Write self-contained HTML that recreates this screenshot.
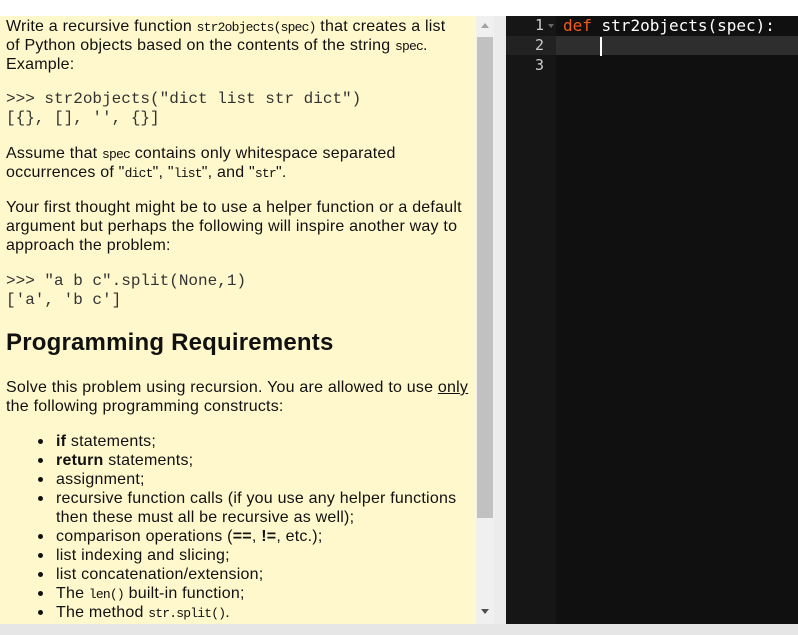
<!DOCTYPE html><html><head><style>
body{margin:0;width:798px;height:635px;background:#fff;position:relative;overflow:hidden;font-family:"Liberation Sans",Arial,sans-serif;font-size:16px;color:#111}
#left{position:absolute;left:0;top:16px;width:476px;height:608px;background:#fff8cc;overflow:hidden}
.l{position:absolute;left:6px;line-height:19px;white-space:nowrap;letter-spacing:0.22px}
.m{font-family:"Liberation Mono",monospace;font-size:16px;color:#333;letter-spacing:0}
.s{font-family:"Liberation Mono",monospace;font-size:13px;letter-spacing:-0.8px}
.b{position:absolute;left:38px;width:5px;height:5px;border-radius:50%;background:#111}
.li{position:absolute;left:56px;line-height:19px;white-space:nowrap;letter-spacing:0.22px}
#sb{position:absolute;left:476px;top:16px;width:18px;height:608px;background:#f0f0f0}
#thumb{position:absolute;left:477px;top:37px;width:16px;height:481px;background:#c1c1c1}
#gap{position:absolute;left:494px;top:16px;width:12px;height:608px;background:#ececec}
#bot{position:absolute;left:0;top:624px;width:798px;height:11px;background:#e6e6e6}
#gut{position:absolute;left:506px;top:16px;width:50px;height:608px;background:#161616}
#ed{position:absolute;left:556px;top:16px;width:242px;height:608px;background:#101010}
.ln{position:absolute;left:506px;width:38px;text-align:right;color:#ccc;font-family:"DejaVu Sans Mono",monospace;font-size:15px;line-height:19px}
.code{font-family:"DejaVu Sans Mono",monospace;font-size:16px;line-height:19px;position:absolute;left:563px;color:#fff;white-space:nowrap}
</style></head><body>
<div id="left"></div>
<div style="position:absolute;left:0;top:17px;width:476px;height:608px">
<div class="l" style="top:0">Write a recursive function <span class="s">str2objects(spec)</span> that creates a list</div>
<div class="l" style="top:19px">of Python objects based on the contents of the string <span class="s">spec</span>.</div>
<div class="l" style="top:38px">Example:</div>
<div class="l m" style="top:73px">&gt;&gt;&gt; str2objects("dict list str dict")</div>
<div class="l m" style="top:92px">[{}, [], '', {}]</div>
<div class="l" style="top:127px">Assume that <span class="s">spec</span> contains only whitespace separated</div>
<div class="l" style="top:146px">occurrences of "<span class="s">dict</span>", "<span class="s">list</span>", and "<span class="s">str</span>".</div>
<div class="l" style="top:181px">Your first thought might be to use a helper function or a default</div>
<div class="l" style="top:200px">argument but perhaps the following will inspire another way to</div>
<div class="l" style="top:219px">approach the problem:</div>
<div class="l m" style="top:255px">&gt;&gt;&gt; "a b c".split(None,1)</div>
<div class="l m" style="top:274px">['a', 'b c']</div>
<div class="l" style="top:311px;font-size:24px;font-weight:bold;line-height:30px;letter-spacing:0.2px">Programming Requirements</div>
<div class="l" style="top:361px">Solve this problem using recursion. You are allowed to use <u>only</u></div>
<div class="l" style="top:380px">the following programming constructs:</div>
<div class="b" style="top:422px"></div><div class="li" style="top:415px"><b>if</b> statements;</div>
<div class="b" style="top:441px"></div><div class="li" style="top:434px"><b>return</b> statements;</div>
<div class="b" style="top:460px"></div><div class="li" style="top:453px">assignment;</div>
<div class="b" style="top:479px"></div><div class="li" style="top:472px">recursive function calls (if you use any helper functions</div>
<div class="li" style="top:491px">then these must all be recursive as well);</div>
<div class="b" style="top:517px"></div><div class="li" style="top:510px">comparison operations (<b>==</b>, <b>!=</b>, etc.);</div>
<div class="b" style="top:536px"></div><div class="li" style="top:529px">list indexing and slicing;</div>
<div class="b" style="top:555px"></div><div class="li" style="top:548px">list concatenation/extension;</div>
<div class="b" style="top:574px"></div><div class="li" style="top:567px">The <span class="s">len()</span> built-in function;</div>
<div class="b" style="top:593px"></div><div class="li" style="top:586px">The method <span class="s">str.split()</span>.</div>
</div>
<div id="sb"></div><div id="thumb"></div>
<div style="position:absolute;left:481px;top:23px;width:0;height:0;border-left:4px solid transparent;border-right:4px solid transparent;border-bottom:5px solid #a3a3a3"></div>
<div style="position:absolute;left:481px;top:609px;width:0;height:0;border-left:4px solid transparent;border-right:4px solid transparent;border-top:5px solid #505050"></div>
<div style="position:absolute;left:501px;top:318px;width:2px;height:6px;border-left:1px solid #999;border-right:1px solid #999"></div>
<div id="gap"></div>
<div id="gut"></div><div id="ed"></div>
<div style="position:absolute;left:506px;top:36px;width:50px;height:19px;background:#222"></div>
<div style="position:absolute;left:556px;top:36px;width:242px;height:19px;background:#2e2e2e"></div>
<div class="ln" style="top:16px">1</div><div style="position:absolute;left:548px;top:24px;border-left:3px solid transparent;border-right:3px solid transparent;border-top:4px solid #666"></div>
<div class="ln" style="top:36px">2</div>
<div class="ln" style="top:56px">3</div>
<div class="code" style="top:16px"><span style="color:#f45a1c">def</span> str2objects(spec):</div>
<div style="position:absolute;left:600px;top:37px;width:2px;height:19px;background:#fff"></div>
<div id="bot"></div>
</body></html>
